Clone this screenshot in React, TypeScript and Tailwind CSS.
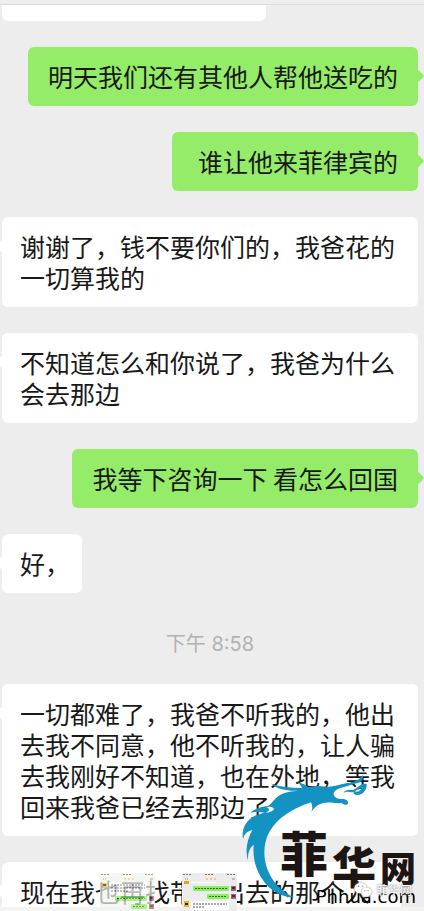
import clsx from "clsx";
import { FaWeixin } from "react-icons/fa";

type Message = {
  text: string;
  mine?: boolean;
  time?: string;
  size?: string;
};

const messages: Message[] = [
  { text: "明天我们还有其他人帮他送吃的", mine: true },
  { text: "\u00a0谁让他来菲律宾的", mine: true },
  { text: "谢谢了，钱不要你们的，我爸花的一切算我的" },
  { text: "不知道怎么和你说了，我爸为什么会去那边" },
  { text: "我等下咨询一下 看怎么回国", mine: true },
  { text: "好，", size: "w-20 whitespace-nowrap" },
  {
    text: "一切都难了，我爸不听我的，他出去我不同意，他不听我的，让人骗去我刚好不知道，也在外地，等我回来我爸已经去那边了",
    time: "下午 8:58",
  },
  { text: "现在我也再找带他出去的那个人", size: "mr-[17px]" },
];

const Bubble = ({ text, mine, size }: Message) => (
  <div
    className={clsx(
      "relative py-[14px] rounded-md text-[25px] leading-[31px] text-[#191919]",
      mine
        ? "self-end px-5 bg-[#95ec69]"
        : "self-stretch pl-[18px] pr-4 bg-white",
      size
    )}
  >
    <span
      className={clsx(
        "absolute top-[23px] size-3 rotate-45 rounded-xs",
        mine ? "-right-1 bg-[#95ec69]" : "-left-1 bg-white"
      )}
    />
    <p className="relative">{text}</p>
  </div>
);

const Thumbnail = ({ second }: { second?: boolean }) => (
  <svg
    viewBox="0 0 55 38"
    className={clsx("w-[55px] h-[38px]", !second && "opacity-70")}
  >
    <rect width="55" height="38" fill={second ? "#ececec" : "#f1f5ee"} />
    <path d="M1 1.5h9M23 1.5h8M45 1.5h8" stroke="#777" strokeDasharray="2 1" />
    <path d="M3 6h4" stroke="#888" strokeDasharray="1 1" />
    <path d="M24 6h10" stroke="#f0cf70" strokeWidth="2" strokeDasharray="2 2" />
    <path d="M50 6h3" stroke="#888" />
    {second ? (
      <>
        <path d="M9 9h25v1H9z" fill="#fff" />
        <path d="M2 8h5v3H2z" fill="#d9a91c" />
        <rect x="11" y="13" width="36" height="5" rx="1" fill="#8cec64" />
        <rect x="25" y="21" width="22" height="5" rx="1" fill="#8cec64" />
        <path d="M13 15.5h32M27 23.5h18" stroke="#356d20" strokeDasharray="2 1" />
        <path d="M49 13h5v5h-5zM49 21h5v5h-5z" fill="#9b6275" />
        <path d="M50 14h3v2h-3zM50 22h3v2h-3z" fill="#512638" />
        <rect x="9" y="28" width="38" height="9" rx="1" fill="#fff" />
        <path d="M11 31h34M11 34h12" stroke="#555" strokeDasharray="2 1" />
        <path d="M2 28h5v6H2z" fill="#e4b91b" />
        <path d="M3 30h3v2H3z" fill="#332a12" />
      </>
    ) : (
      <>
        <rect x="9" y="9" width="38" height="12" rx="1" fill="#fff" />
        <path
          d="M11 12h34M11 15h34M11 18h17"
          stroke="#555"
          strokeDasharray="2 1"
        />
        <path d="M2 10h5v5H2z" fill="#e4b91b" />
        <path d="M3 11h3v2H3z" fill="#332a12" />
        <rect x="15" y="23" width="32" height="5" rx="1" fill="#8cec64" />
        <rect x="31" y="31" width="16" height="5" rx="1" fill="#8cec64" />
        <path d="M17 25.5h28M33 33.5h12" stroke="#356d20" strokeDasharray="2 1" />
        <path d="M49 23h5v5h-5zM49 31h5v5h-5z" fill="#9b6275" />
        <path d="M50 24h3v2h-3zM50 32h3v2h-3z" fill="#512638" />
      </>
    )}
  </svg>
);

const Logo = () => (
  <div className="absolute bottom-0 right-0 w-[182px] h-[141px] text-[#1d1512]">
    <svg viewBox="66 30 546 423" className="absolute inset-0 size-full">
      <path
        fill="#1492c1"
        d="M222 412C188 412 148 394 122 350C107 324 98 296 101 254C88 264 83 280 84 302C75 272 80 242 97 210C82 214 73 221 69 237C63 206 80 177 110 165L133 158C118 155 105 155 91 158C106 145 125 140 144 138C158 130 165 112 184 103C205 94 222 94 240 91C212 94 174 90 153 71C182 80 211 84 246 84C244 78 239 73 233 67C248 70 258 75 266 82C282 77 300 78 318 80C340 82 361 72 382 69C403 67 420 59 427 45C432 55 427 64 417 68C396 72 376 80 361 84C346 89 340 96 341 104C344 113 353 117 363 117C378 116 387 122 383 132C378 137 371 134 364 129C345 132 324 124 308 130C292 134 282 143 274 156C278 146 278 137 273 127C222 143 172 174 149 214C127 255 128 302 150 345C168 379 194 400 222 412Z"
      />
      <path
        fill="#fff"
        d="M136 158C148 158 159 154 162 147C157 139 148 139 139 143C150 145 151 152 136 158Z"
      />
      <path
        fill="#1492c1"
        d="M370 99C381 83 393 96 406 86C417 82 422 69 440 72C441 89 430 105 412 105C401 105 398 97 403 93C411 99 421 93 425 84C411 88 401 100 388 96C381 94 376 96 370 99Z"
      />
    </svg>
    <div className="absolute bottom-6 right-2 flex items-end gap-1 font-black leading-none">
      <span className="pb-3 text-5xl">菲</span>
      <span className="text-[44px]">华</span>
      <span className="text-4xl">网</span>
    </div>
    <p className="absolute bottom-1 right-2 font-['DejaVu_Sans'] text-lg leading-5 text-black">
      Phhua.com
    </p>
    <div className="absolute bottom-3 right-3 flex items-center gap-1 text-white [text-shadow:0_0_2px_#555]">
      <FaWeixin size={18} className="drop-shadow-[0_0_1px_#888]" />
      <span className="text-xs leading-4">菲华网</span>
    </div>
  </div>
);

const App = () => {
  return (
    <main className="relative flex flex-col w-full h-screen overflow-hidden bg-[#ededed] font-['Noto_Sans_CJK_SC',sans-serif]">
      <div className="h-1 shrink-0 bg-[#efeeed]" />
      <div className="flex flex-col flex-1 min-h-0 gap-[26px] pl-0.5 pr-1.5 overflow-hidden border-t border-[#dedcdb]">
        <div className="w-[264px] h-4 shrink-0 rounded-b-md bg-white" />
        {messages.map((message) => (
          <div key={message.text} className="flex flex-col shrink-0">
            {message.time && (
              <time className="self-center mt-[13px] mb-7 text-xl leading-6 text-[#b2b2b2] font-['Inter','Noto_Sans_CJK_SC',sans-serif]">
                {message.time}
              </time>
            )}
            <Bubble {...message} />
          </div>
        ))}
      </div>
      <div className="h-1 shrink-0 bg-[#f3f4f1]" />
      <div className="absolute bottom-0 left-[100px] flex gap-[27px]">
        <Thumbnail />
        <Thumbnail second />
      </div>
      <Logo />
    </main>
  );
};

export default App;
